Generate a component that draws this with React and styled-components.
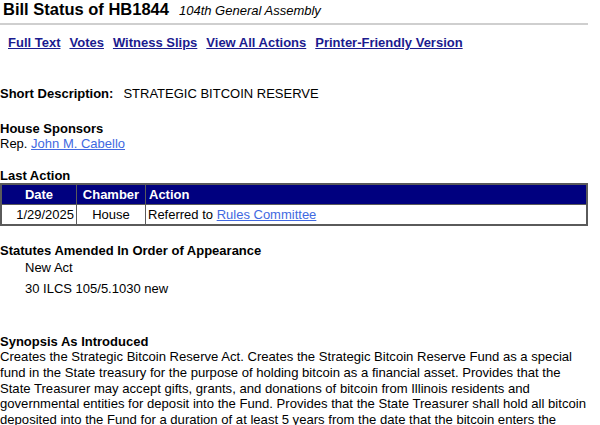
import styled, { createGlobalStyle } from 'styled-components';

const GlobalStyle = createGlobalStyle`
  body {
    margin: 0;
    background: #ffffff;
    color: #000000;
    font-family: "Liberation Sans", Arial, sans-serif;
    font-size: 13px;
    line-height: 15px;
  }
`;

const Page = styled.div`
  width: 600px;
`;

const TitleRow = styled.div`
  display: flex;
  align-items: baseline;
  gap: 10px;
  padding-left: 3px;
  height: 18px;
`;

const Title = styled.h1`
  margin: 0;
  font-size: 16.5px;
  font-weight: bold;
  line-height: 18px;
`;

const Session = styled.i`
  font-size: 13px;
`;

const Rule = styled.hr`
  width: 588px;
  margin: 5px 0 0;
  height: 2px;
  border: none;
  background: #cfcfcf;
`;

const NavLinks = styled.nav`
  display: flex;
  gap: 9px;
  padding-left: 8px;
  margin-top: 10px;
`;

const NavLink = styled.a`
  color: #1b1b8f;
  font-weight: bold;
  text-decoration: underline;
`;

const Section = styled.div`
  margin-top: ${(p) => p.$top}px;
`;

const Label = styled.b`
  display: block;
`;

const InlineLabel = styled.b`
  margin-right: 10px;
`;

const Link = styled.a`
  color: #4169e1;
  text-decoration: underline;
`;

const Table = styled.table`
  width: 588px;
  border-collapse: collapse;
  border: 2px solid #5a5a5a;
  font-size: 13px;
`;

const Th = styled.th`
  background: #00007f;
  color: #ffffff;
  font-weight: bold;
  height: 19px;
  padding: 0 3px;
  border: 1px solid #5a5a5a;
  text-align: ${(p) => p.$align || 'center'};
  width: ${(p) => (p.$w ? `${p.$w}px` : 'auto')};
`;

const Td = styled.td`
  height: 19px;
  padding: 0 2px;
  border: 1px solid #5a5a5a;
  text-align: ${(p) => p.$align || 'left'};
`;

const Indented = styled.div`
  padding-left: 25px;
  margin-top: ${(p) => p.$top}px;
`;

const Paragraph = styled.p`
  margin: 0;
  font-size: 13.1px;
  line-height: 15.8px;
  white-space: nowrap;
`;

const synopsis = [
  'Creates the Strategic Bitcoin Reserve Act. Creates the Strategic Bitcoin Reserve Fund as a special',
  'fund in the State treasury for the purpose of holding bitcoin as a financial asset. Provides that the',
  'State Treasurer may accept gifts, grants, and donations of bitcoin from Illinois residents and',
  'governmental entities for deposit into the Fund. Provides that the State Treasurer shall hold all bitcoin',
  'deposited into the Fund for a duration of at least 5 years from the date that the bitcoin enters the',
  'Fund. Provides that the State Treasurer may sell or exchange bitcoin held in the Fund only under',
];

export default function App() {
  return (
    <Page>
      <GlobalStyle />
      <TitleRow>
        <Title>Bill Status of HB1844</Title>
        <Session>104th General Assembly</Session>
      </TitleRow>
      <Rule />
      <NavLinks>
        <NavLink href="#">Full Text</NavLink>
        <NavLink href="#">Votes</NavLink>
        <NavLink href="#">Witness Slips</NavLink>
        <NavLink href="#">View All Actions</NavLink>
        <NavLink href="#">Printer-Friendly Version</NavLink>
      </NavLinks>

      <Section $top={36}>
        <InlineLabel>Short Description:</InlineLabel>STRATEGIC BITCOIN RESERVE
      </Section>

      <Section $top={20}>
        <Label>House Sponsors</Label>
        Rep. <Link href="#">John M. Cabello</Link>
      </Section>

      <Section $top={17}>
        <Label>Last Action</Label>
        <Table>
          <thead>
            <tr>
              <Th $w={68}>Date</Th>
              <Th $w={62}>Chamber</Th>
              <Th $align="left">Action</Th>
            </tr>
          </thead>
          <tbody>
            <tr>
              <Td $align="right">1/29/2025</Td>
              <Td $align="center">House</Td>
              <Td>Referred to <Link href="#">Rules Committee</Link></Td>
            </tr>
          </tbody>
        </Table>
      </Section>

      <Section $top={17}>
        <Label>Statutes Amended In Order of Appearance</Label>
        <Indented $top={2}>New Act</Indented>
        <Indented $top={6}>30 ILCS 105/5.1030 new</Indented>
      </Section>

      <Section $top={38}>
        <Label>Synopsis As Introduced</Label>
        <Paragraph>
          {synopsis.map((line, i) => (
            <span key={i}>
              {line}
              <br />
            </span>
          ))}
        </Paragraph>
      </Section>
    </Page>
  );
}
